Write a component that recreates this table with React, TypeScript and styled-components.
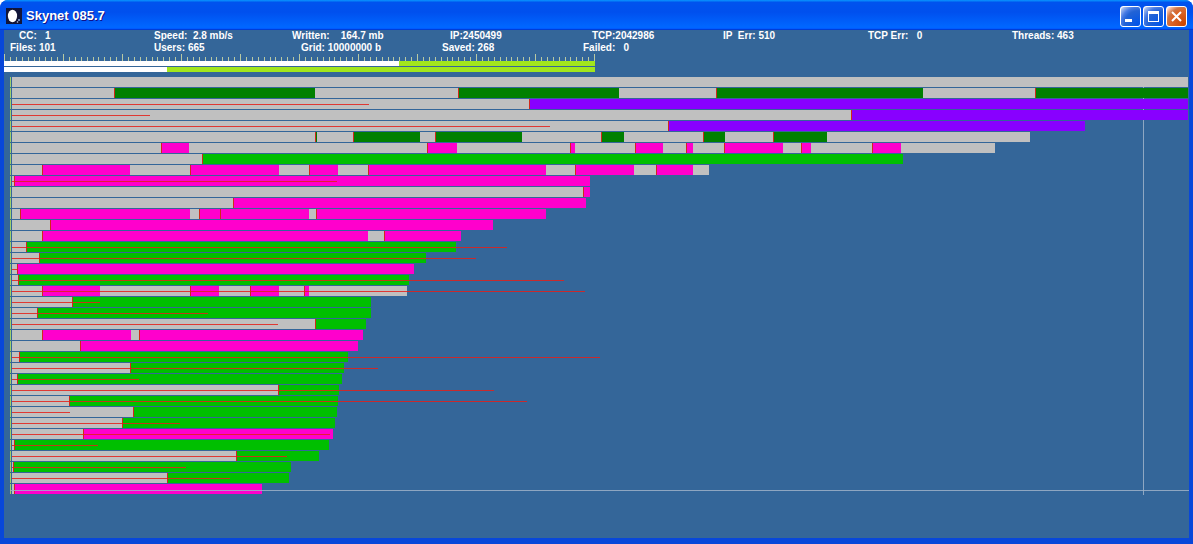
import styled, { createGlobalStyle } from 'styled-components';

const GlobalStyle = createGlobalStyle`
  html, body {
    margin: 0;
    padding: 0;
    background: #ffffff;
  }
  body {
    font-family: 'Liberation Sans', Arial, sans-serif;
    overflow: hidden;
  }
`;

type Kind = 'g' | 'D' | 'G' | 'M' | 'P';

const COLORS: Record<Kind, string> = {
  g: '#c0c0c0',
  D: '#008000',
  G: '#00bf00',
  M: '#ff00cc',
  P: '#8800ff',
};

// segment string: kind + end x (page coords), rows start at x = 12
const ROWS: [string, number?][] = [
  ['g1188'],
  ['g114 D315 g458 D619 g716 D923 g1035 D1188'],
  ['g529 P1188', 369],
  ['g851 P1188', 150],
  ['g668 P1085', 550],
  ['g315 D317 g353 D420 g435 D522 g601 D624 g703 D725 g773 D827 g1030'],
  ['g161 M189 g427 M457 g570 M575 g635 M663 g686 M693 g724 M783 g801 M811 g872 M901 g995'],
  ['g202 G903'],
  ['g42 M130 g190 M279 g309 M338 g368 M546 g575 M634 g656 M693 g709'],
  ['g14 M590', 337],
  ['g583 M590'],
  ['g233 M586'],
  ['g20 M190 g199 M220 M309 g316 M546'],
  ['g50 M493'],
  ['g42 M368 g384 M461'],
  ['g26 G456', 507],
  ['g39 G426', 476],
  ['g17 M414', 17],
  ['g18 G409', 564],
  ['g42 M100 g190 M219 g250 M279 g304 M309 g407', 585],
  ['g72 G371', 100],
  ['g37 G371', 208],
  ['g315 G366', 278],
  ['g42 M131 g139 M363'],
  ['g80 M358'],
  ['g19 G348', 600],
  ['g130 G344', 378],
  ['g17 G342', 139],
  ['g278 G339', 494],
  ['g69 G338', 527],
  ['g133 G337', 70],
  ['g122 G335', 180],
  ['g83 M333', 330],
  ['g14 G329', 98],
  ['g236 G319', 287],
  ['g13 G291', 186],
  ['g167 G289', 230],
  ['g14 M262'],
];

const STATS_TOP: [number, string][] = [
  [13, 'CC:   1'],
  [5, 'Speed:  2.8 mb/s'],
  [0, 'Written:    164.7 mb'],
  [15, 'IP:2450499'],
  [14, 'TCP:2042986'],
  [2, 'IP  Err: 510'],
  [4, 'TCP Err:   0'],
  [5, 'Threads: 463'],
];

const STATS_BOTTOM: [number, string][] = [
  [4, 'Files: 101'],
  [5, 'Users: 665'],
  [9, 'Grid: 10000000 b'],
  [7, 'Saved: 268'],
  [5, 'Failed:   0'],
];

const PROGRESS: [number, number][] = [
  [395, 196],
  [163, 428],
];

const Window = styled.div`
  width: 1193px;
  height: 544px;
  display: flex;
  flex-direction: column;
  background: #0847d9;
  border-radius: 8px 8px 0 0;
  overflow: hidden;
  box-sizing: border-box;
`;

const TitleBar = styled.div`
  height: 30px;
  flex: none;
  display: flex;
  align-items: center;
  padding: 0 6px;
  background: linear-gradient(
    180deg,
    #0997ff,
    #0053ee 8%,
    #0050ee 40%,
    #0066ff 88%,
    #0066ff 93%,
    #005bff 95%,
    #003dd7 96%,
    #003dd7
  );
`;

const TitleIcon = styled.svg`
  width: 16px;
  height: 16px;
  margin-top: 2px;
  flex: none;
`;

const TitleText = styled.span`
  margin-left: 4px;
  color: #ffffff;
  font-size: 13px;
  font-weight: bold;
  text-shadow: 1px 1px #0f1089;
  flex: 1;
`;

const Controls = styled.div`
  display: flex;
  gap: 2px;
  margin-top: 3px;
`;

const CtrlButton = styled.div<{ $close?: boolean }>`
  width: 21px;
  height: 21px;
  box-sizing: border-box;
  border: 1px solid #ffffff;
  border-radius: 3px;
  display: flex;
  align-items: center;
  justify-content: center;
  background: ${({ $close }) =>
    $close
      ? 'radial-gradient(circle at 90% 90%, #cc4600 0%, #dc6527 55%, #cd7546 70%, #ffccb2 90%, #fff 100%)'
      : 'radial-gradient(circle at 90% 90%, #0054e9 0%, #2263d5 55%, #4479e4 70%, #a3bbec 90%, #fff 100%)'};
`;

const Client = styled.div`
  flex: 1;
  margin: 0 4px 6px;
  background: #346699;
  display: flex;
  flex-direction: column;
`;

const StatsGrid = styled.div`
  display: grid;
  grid-template-columns: repeat(8, 143px);
  padding-left: 2px;
`;

const Stat = styled.span<{ $indent: number }>`
  padding-left: ${({ $indent }) => $indent}px;
  height: 12px;
  line-height: 12px;
  font-size: 10px;
  font-weight: bold;
  color: #ffffff;
  white-space: pre;
`;

const Ruler = styled.svg`
  display: block;
  width: 591px;
  height: 7px;
`;

const Track = styled.div<{ $gap?: boolean }>`
  display: flex;
  width: 591px;
  height: 5px;
  margin-top: ${({ $gap }) => ($gap ? '1px' : '0')};
`;

const Fill = styled.div<{ $lime?: boolean }>`
  height: 100%;
  background: ${({ $lime }) => ($lime ? '#a2e61c' : '#ffffff')};
`;

const Chart = styled.div`
  position: relative;
  margin-top: 5px;
  padding-left: 6px;
`;

const Row = styled.div`
  position: relative;
  display: flex;
  height: 10px;
  margin-bottom: 1px;
  z-index: 1;
`;

const Marker = styled.div`
  width: 1px;
  margin-right: 1px;
  background: #9fd06a;
`;

const Segment = styled.div<{ $kind: Kind }>`
  height: 100%;
  box-sizing: border-box;
  background: ${({ $kind }) => COLORS[$kind]};
  border-left: ${({ $kind }) => ($kind === 'g' ? 'none' : '1px solid #d0281a')};
`;

const Trace = styled.div`
  position: absolute;
  left: 2px;
  top: 5px;
  height: 1px;
  background: #e4201a;
  opacity: 0.85;
`;

const GuideV = styled.div`
  position: absolute;
  left: 1139px;
  top: 0;
  width: 1px;
  height: 418px;
  background: #8ea7c2;
`;

const GuideH = styled.div`
  position: absolute;
  left: 6px;
  right: 0;
  top: 413px;
  height: 1px;
  background: #9fb2c8;
  opacity: 0.85;
  z-index: 2;
`;

const parseRow = (spec: string) => {
  let start = 12;
  return spec.split(' ').map((tok) => {
    const kind = tok[0] as Kind;
    const end = Number(tok.slice(1));
    const width = end - start;
    start = end;
    return { kind, width };
  });
};

const App = () => {
  const ticks = Array.from({ length: 101 }, (_, i) => i);

  return (
    <>
      <GlobalStyle />
      <Window>
        <TitleBar>
          <TitleIcon viewBox="0 0 16 16">
            <rect x="0" y="0" width="16" height="16" fill="#121538" />
            <ellipse cx="6.5" cy="8" rx="4.6" ry="6.2" fill="#ffffff" />
            <circle cx="13" cy="12" r="1" fill="#8fb4e8" />
            <circle cx="11.5" cy="14" r="0.8" fill="#c8d8f4" />
          </TitleIcon>
          <TitleText>Skynet 085.7</TitleText>
          <Controls>
            <CtrlButton>
              <svg width="19" height="19" viewBox="0 0 19 19">
                <rect x="4" y="12" width="7" height="3" fill="#ffffff" />
              </svg>
            </CtrlButton>
            <CtrlButton>
              <svg width="19" height="19" viewBox="0 0 19 19">
                <rect x="4.5" y="4.5" width="10" height="10" fill="none" stroke="#ffffff" strokeWidth="1" />
                <rect x="4" y="4" width="11" height="3" fill="#ffffff" />
              </svg>
            </CtrlButton>
            <CtrlButton $close>
              <svg width="19" height="19" viewBox="0 0 19 19">
                <path d="M5 5 L14 14 M14 5 L5 14" stroke="#ffffff" strokeWidth="2" />
              </svg>
            </CtrlButton>
          </Controls>
        </TitleBar>

        <Client>
          <StatsGrid>
            {STATS_TOP.map(([indent, text]) => (
              <Stat key={text} $indent={indent}>
                {text}
              </Stat>
            ))}
            {STATS_BOTTOM.map(([indent, text]) => (
              <Stat key={text} $indent={indent}>
                {text}
              </Stat>
            ))}
          </StatsGrid>

          <Ruler viewBox="0 0 591 7">
            {ticks.map((i) => {
              const x = Math.round(i * 5.9) + 0.5;
              return (
                <line
                  key={i}
                  x1={x}
                  x2={x}
                  y1={i % 10 === 0 ? 0 : 3}
                  y2={7}
                  stroke="#b9c9a3"
                  strokeWidth="1"
                />
              );
            })}
          </Ruler>

          {PROGRESS.map(([done, rest], i) => (
            <Track key={i} $gap={i > 0}>
              <Fill style={{ width: done }} />
              <Fill $lime style={{ width: rest }} />
            </Track>
          ))}

          <Chart>
            <GuideV />
            {ROWS.map(([spec, trace], r) => (
              <Row key={r}>
                <Marker />
                {parseRow(spec).map((seg, s) => (
                  <Segment key={s} $kind={seg.kind} style={{ width: seg.width }} />
                ))}
                {trace ? <Trace style={{ width: trace - 12 }} /> : null}
              </Row>
            ))}
            <GuideH />
          </Chart>
        </Client>
      </Window>
    </>
  );
};

export default App;
